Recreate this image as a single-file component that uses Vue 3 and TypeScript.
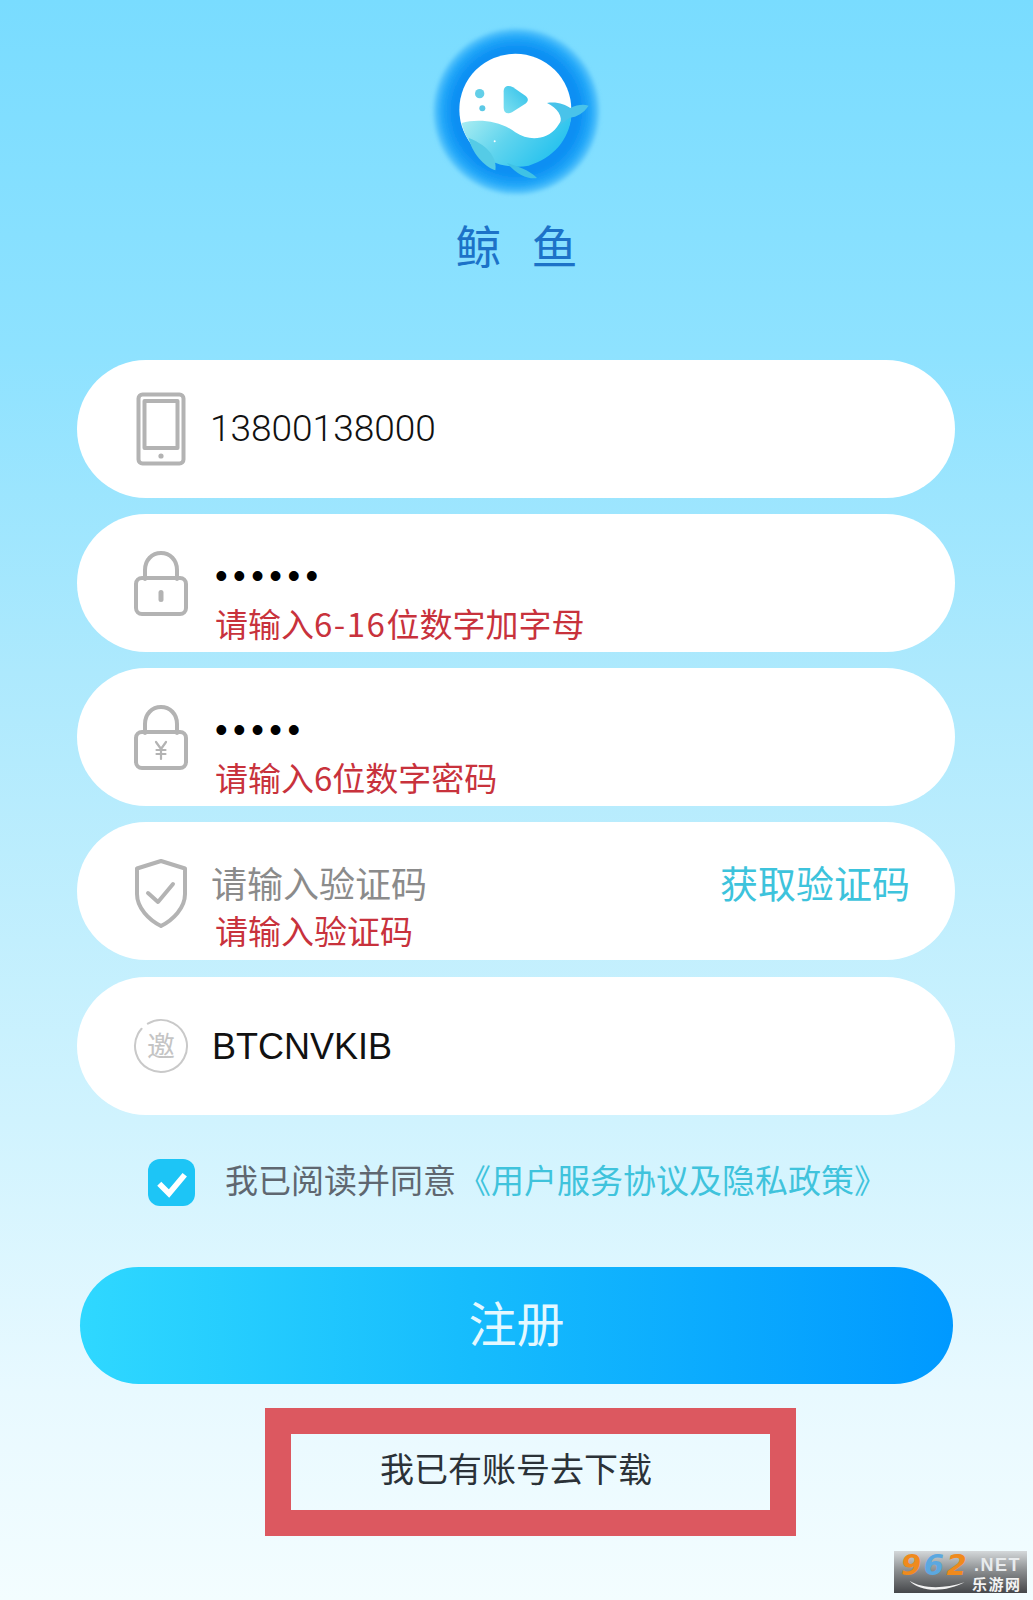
<script setup lang="ts">
// Register screen for the whale app
const agreeLabel = '我已阅读并同意'
const agreeLink = '《用户服务协议及隐私政策》'
</script>

<template>
  <div class="page">
    <!-- Logo -->
    <svg class="logo" viewBox="80 40 540 540" aria-hidden="true">
      <defs>
        <radialGradient id="halo" cx="50%" cy="50%" r="50%">
          <stop offset="0%" stop-color="#0b8cf2" />
          <stop offset="76%" stop-color="#0c8ff3" />
          <stop offset="90%" stop-color="#22a8f9" />
          <stop offset="100%" stop-color="#5cc8fc" />
        </radialGradient>
        <linearGradient id="body" x1="0" y1="0" x2="1" y2="0.4">
          <stop offset="0%" stop-color="#aeeef2" />
          <stop offset="50%" stop-color="#5fd4ee" />
          <stop offset="100%" stop-color="#27c2ee" />
        </linearGradient>
        <linearGradient id="play" x1="0" y1="1" x2="1" y2="0">
          <stop offset="0%" stop-color="#7fe0f0" />
          <stop offset="100%" stop-color="#2fc0ea" />
        </linearGradient>
        <filter id="soft" x="-10%" y="-10%" width="120%" height="120%">
          <feGaussianBlur stdDeviation="7" />
        </filter>
      </defs>
      <circle cx="348" cy="305" r="248" fill="url(#halo)" filter="url(#soft)" />
      <circle cx="345" cy="300" r="168" fill="#fff" />
      <path d="M184 340C230 326 300 332 345 368C385 395 440 392 470 352L490 322L513 322C505 390 460 445 385 468C330 480 260 460 225 420C205 395 190 370 184 340Z" fill="url(#body)" />
      <path d="M440 280C470 275 495 285 510 295C530 285 550 283 565 288C550 310 530 322 508 324L478 346C490 320 470 295 440 280Z" fill="#49c3ea" />
      <path d="M205 385C215 430 250 470 285 482C290 450 270 410 205 385Z" fill="#55cbe6" />
      <path d="M320 460C350 470 385 480 410 505C385 510 350 495 320 460Z" fill="#3fc2e5" />
      <circle cx="238" cy="252" r="14" fill="#63cfe8" />
      <circle cx="246" cy="296" r="9" fill="#5cc9e6" />
      <path d="M310 245C310 228 325 225 338 233L375 258C385 265 385 275 375 282L335 308C322 315 310 310 310 295Z" fill="url(#play)" />
      <circle cx="283" cy="395" r="3" fill="#fff" />
    </svg>

    <div class="brand">
      <span>鲸</span>
      <span>鱼</span>
    </div>

    <!-- Form -->
    <div class="form">
      <div class="pill">
        <svg class="icon" viewBox="0 0 56 74" aria-hidden="true">
          <rect x="5.500" y="2.500" width="45" height="69" rx="4" />
          <rect x="11.500" y="9" width="33" height="47" />
          <circle cx="28" cy="64" r="2.600" class="fill" />
        </svg>
        <div class="value">13800138000</div>
      </div>

      <div class="pill has-hint">
        <svg class="icon" viewBox="0 0 56 74" aria-hidden="true">
          <path d="M12 33V24C12 14 19 7 28 7C37 7 44 14 44 24V33" />
          <rect x="3" y="32" width="50" height="36" rx="6" />
          <rect x="25.500" y="44" width="5" height="12" rx="2.500" class="fill" />
        </svg>
        <div class="field">
          <div class="dots">••••••</div>
          <div class="hint">请输入<span class="num">6-16</span>位数字加字母</div>
        </div>
      </div>

      <div class="pill has-hint">
        <svg class="icon" viewBox="0 0 56 74" aria-hidden="true">
          <path d="M12 33V24C12 14 19 7 28 7C37 7 44 14 44 24V33" />
          <rect x="3" y="32" width="50" height="36" rx="6" />
          <path d="M23 42L28 49L33 42M28 49V59M23.500 50H32.500M23.500 54H32.500" class="thin" />
        </svg>
        <div class="field">
          <div class="dots">•••••</div>
          <div class="hint">请输入6位数字密码</div>
        </div>
      </div>

      <div class="pill has-hint">
        <svg class="icon" viewBox="0 0 56 74" aria-hidden="true">
          <path d="M28 7L52 14.500V40C52 54 40 66 28 72C16 66 4 54 4 40V14.500Z" />
          <path d="M15 39L25 48L40 30" />
        </svg>
        <div class="field">
          <div class="placeholder">请输入验证码</div>
          <div class="hint">请输入验证码</div>
        </div>
        <div class="get-code">获取验证码</div>
      </div>

      <div class="pill invite-row">
        <svg class="icon invite" viewBox="0 0 56 74" aria-hidden="true">
          <circle cx="28" cy="37" r="26" stroke-dasharray="128 8" transform="rotate(-62 28 37)" />
          <text x="28" y="48" text-anchor="middle">邀</text>
        </svg>
        <div class="value invite-code">BTCNVKIB</div>
      </div>
    </div>

    <!-- Agreement -->
    <div class="agree">
      <div class="checkbox">
        <svg viewBox="0 0 24 24" width="36" height="36" aria-hidden="true">
          <path d="M3.500 12.500L10 19L20.500 6.500" />
        </svg>
      </div>
      <div class="agree-text">{{ agreeLabel }}<span class="agree-link">{{ agreeLink }}</span></div>
    </div>

    <button class="submit">注册</button>

    <div class="login-box">我已有账号去下载</div>

    <!-- Site stamp -->
    <div class="stamp">
      <span class="stamp-num"><i>9</i><b>6</b><i>2</i></span>
      <span class="stamp-net">.NET</span>
      <svg class="stamp-swoosh" viewBox="0 0 70 14" aria-hidden="true">
        <path d="M0 1C16 11 42 12 70 3C46 16 14 16 0 1Z" />
      </svg>
      <span class="stamp-name">乐游网</span>
    </div>
  </div>
</template>

<style scoped>
.page {
  position: relative;
  width: 1033px;
  height: 1600px;
  padding-top: 23px;
  box-sizing: border-box;
  overflow: hidden;
  display: flex;
  flex-direction: column;
  font-family: "Noto Sans CJK SC", "Liberation Sans", sans-serif;
  background: linear-gradient(180deg, #79dcff 0%, #8ee2ff 22%, #ade9fd 42%, #d0f3fe 70%, #e8f9ff 87%, #f3fdff 100%);
}

.logo {
  width: 180px;
  height: 180px;
  margin-left: 427px;
}

.brand {
  display: flex;
  justify-content: center;
  gap: 30px;
  margin-top: 18px;
  font-size: 46px;
  line-height: 47px;
  font-weight: 400;
  color: #1c72c8;
}

.form {
  display: flex;
  flex-direction: column;
  gap: 16px;
  width: 878px;
  margin: 92px 0 0 77px;
}

.pill {
  display: flex;
  align-items: center;
  height: 138px;
  padding: 0 45px 0 56px;
  box-sizing: border-box;
  border-radius: 69px;
  background: #fff;
}

.invite-row {
  margin-top: 1px;
}

.icon {
  flex: none;
  width: 56px;
  height: 74px;
  fill: none;
  stroke: #b3b3b3;
  stroke-width: 4;
  stroke-linejoin: round;
  stroke-linecap: round;
}

.icon .fill {
  fill: #b3b3b3;
  stroke: none;
}

.icon .thin {
  stroke-width: 2.200;
}

.invite circle {
  stroke: #c9c9c9;
  stroke-width: 2;
}

.invite text {
  fill: #c4c4c4;
  stroke: none;
  font-size: 28px;
  font-family: "Noto Sans CJK SC", sans-serif;
}

.value {
  margin-left: 21px;
  margin-top: -2px;
  font-family: Roboto, "Liberation Sans", sans-serif;
  font-size: 37px;
  font-weight: 300;
  color: #111;
}

.invite-code {
  margin-left: 23px;
  margin-top: 2px;
  font-family: "Liberation Sans", sans-serif;
  font-size: 36px;
  font-weight: 400;
}

.field {
  flex: 1;
  align-self: stretch;
  padding-top: 37px;
  margin-left: 26px;
}

.dots {
  height: 48px;
  line-height: 49px;
  font-family: "Liberation Sans", sans-serif;
  font-size: 36px;
  letter-spacing: 5.500px;
  color: #000;
}

.placeholder {
  height: 48px;
  line-height: 48px;
  margin: -1px 0 0 -4px;
  font-size: 36px;
  color: #8b8b8b;
}

.hint {
  height: 48px;
  line-height: 48px;
  font-size: 33px;
  color: #c8323c;
}

.hint .num {
  letter-spacing: 1.500px;
}

.get-code {
  align-self: flex-start;
  margin-top: 36px;
  line-height: 48px;
  font-size: 38px;
  color: #3dc3dc;
}

.agree {
  display: flex;
  align-items: center;
  gap: 30px;
  margin: 44px 0 0 148px;
}

.checkbox {
  display: flex;
  align-items: center;
  justify-content: center;
  width: 47px;
  height: 47px;
  border-radius: 12px;
  background: #1dc5f6;
}

.checkbox path {
  fill: none;
  stroke: #fff;
  stroke-width: 3.800;
}

.agree-text {
  padding-bottom: 6px;
  font-size: 33px;
  line-height: 41px;
  color: #5f6770;
  white-space: nowrap;
}

.agree-link {
  margin-left: 2px;
  color: #3fc3dc;
}

.submit {
  width: 873px;
  height: 117px;
  margin: 61px 0 0 80px;
  border: none;
  border-radius: 59px;
  padding: 0 0 10px;
  font-family: inherit;
  font-size: 48px;
  color: #e4f8ff;
  background: linear-gradient(90deg, #2fd8ff 0%, #16bcfd 45%, #0099ff 100%);
}

.login-box {
  display: flex;
  align-items: center;
  width: 531px;
  height: 128px;
  margin: 24px 0 0 265px;
  padding: 0 0 10px 89px;
  border: 26px solid #dc5860;
  box-sizing: border-box;
  font-size: 34px;
  color: #2b3238;
}

/* watermark sits over the corner of the page */
.stamp {
  position: absolute;
  left: 894px;
  top: 1551px;
  width: 133px;
  height: 42px;
  background: linear-gradient(180deg, #d4d8da 0%, #8d9092 45%, #45474a 100%);
}

.stamp-num {
  position: absolute;
  left: 7px;
  top: 0;
  font-family: "DejaVu Sans", sans-serif;
  font-size: 29px;
  line-height: 28px;
  font-weight: 700;
  font-style: italic;
  letter-spacing: 2.500px;
}

.stamp-num i {
  color: #ef8a1d;
}

.stamp-num b {
  color: #5ba8e0;
}

.stamp-net {
  position: absolute;
  left: 80px;
  top: 4px;
  font-family: "Liberation Sans", sans-serif;
  font-size: 18px;
  line-height: 20px;
  font-weight: 700;
  letter-spacing: 1.500px;
  color: #e8ebed;
}

.stamp-swoosh {
  position: absolute;
  left: 8px;
  top: 29px;
  width: 70px;
  height: 11px;
  fill: #f2f2f2;
}

.stamp-name {
  position: absolute;
  left: 78px;
  top: 24px;
  font-size: 15px;
  line-height: 17px;
  font-weight: 700;
  letter-spacing: 1.500px;
  color: #f3f3f3;
}
</style>
